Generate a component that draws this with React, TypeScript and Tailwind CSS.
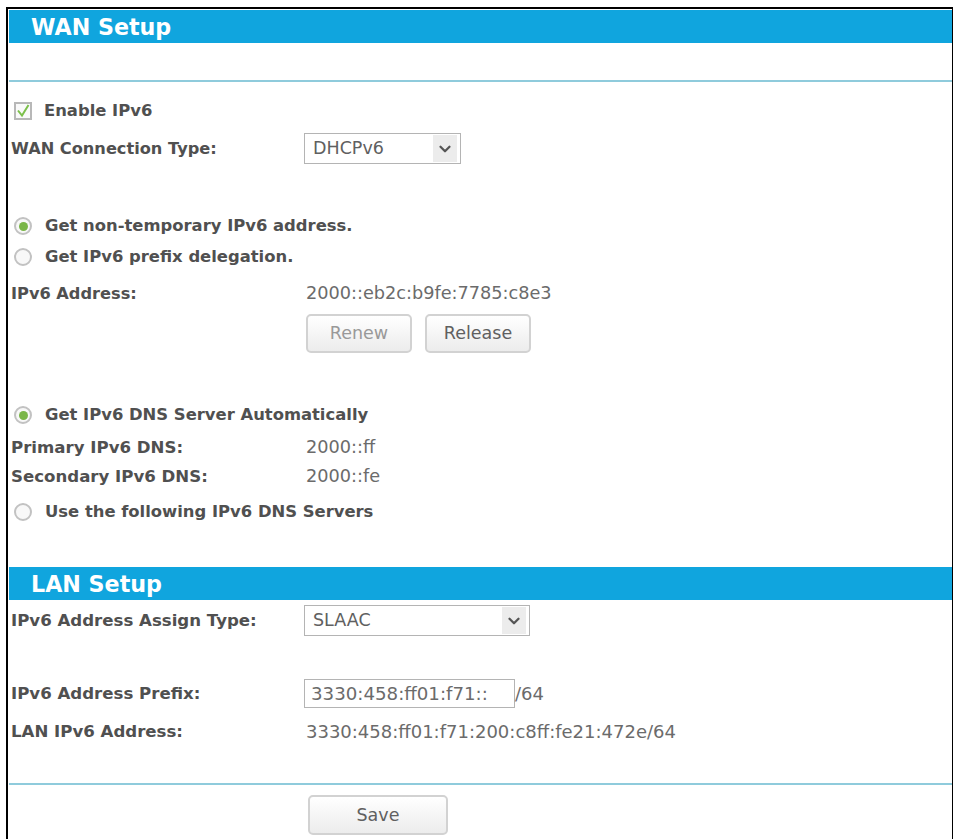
import { ReactNode } from "react";
import { ChevronDown } from "lucide-react";

const labelFont = "font-['DejaVu_Sans',sans-serif]";

function SectionHeader({ title, className = "" }: { title: string; className?: string }) {
  return (
    <div className={`flex h-[33px] items-center bg-[#10a5de] pl-[22px] pt-[3px] text-[22.2px] font-bold text-white ${className}`}>
      {title}
    </div>
  );
}

function Label({ children, className = "text-[16.6px]" }: { children: ReactNode; className?: string }) {
  return <div className={`w-[295px] shrink-0 pl-[2px] pt-[2px] font-bold text-[#505050] ${className}`}>{children}</div>;
}

function Value({ children }: { children: ReactNode }) {
  return <div className="pl-[2px] text-[17.7px] text-[#6b6b6b]">{children}</div>;
}

function Radio({ checked = false, label }: { checked?: boolean; label: string }) {
  return (
    <div className="flex items-center pl-[5px] text-[16.4px] font-bold text-[#505050]">
      <span className="mr-[13px] flex size-[18px] items-center justify-center rounded-full border-2 border-[#c2c2c2] bg-[#f8f8f8]">
        {checked && <span className="size-[9px] rounded-full bg-[#7ab648]" />}
      </span>
      {label}
    </div>
  );
}

function Select({ value, className }: { value: string; className: string }) {
  return (
    <div className={`flex items-center justify-between border border-[#b4b4b4] bg-white pl-[8px] pr-[3px] text-[17.5px] text-[#606060] ${className}`}>
      {value}
      <span className="flex h-[27px] w-[24px] items-center justify-center bg-[#ececec]">
        <ChevronDown className="size-[18px] text-[#555]" strokeWidth={3} />
      </span>
    </div>
  );
}

function Button({ label, width, muted = false }: { label: string; width: string; muted?: boolean }) {
  return (
    <div
      className={`flex items-center justify-center rounded-[5px] border-2 border-[#d2d2d2] bg-gradient-to-b from-white to-[#ececec] text-[17.5px] ${width} ${
        muted ? "text-[#999]" : "text-[#606060]"
      }`}
    >
      {label}
    </div>
  );
}

export default function App() {
  return (
    <div className={`min-h-[839px] bg-white pl-[6px] pr-[3px] pt-[7px] ${labelFont}`}>
      <div className="h-[832px] border-l-2 border-r border-t-2 border-black pl-px pt-px">
        <SectionHeader title="WAN Setup" />
        <div className="mt-[37px] h-[2px] bg-[#8fcbdc]" />

        <div className="mt-[19px] flex h-[20px] items-center pl-[5px] text-[16.4px] font-bold text-[#505050]">
          <span className="mr-[12px] flex size-[18px] items-center justify-center border-2 border-[#b8b8b8] bg-[#fafafa]">
            <svg viewBox="0 0 14 14" className="size-[16px]">
              <path d="M2 6.5l4 5L12.5 1" fill="none" stroke="#7cc04b" strokeWidth="2" />
            </svg>
          </span>
          Enable IPv6
        </div>

        <div className="mt-[12px] flex h-[31px] items-center">
          <Label className="text-[16.2px]">WAN Connection Type:</Label>
          <Select value="DHCPv6" className="h-[31px] w-[157px]" />
        </div>

        <div className="mt-[50px] h-[20px]">
          <Radio checked label="Get non-temporary IPv6 address." />
        </div>
        <div className="mt-[11px] h-[20px]">
          <Radio label="Get IPv6 prefix delegation." />
        </div>

        <div className="mt-[18px] flex h-[20px] items-center">
          <Label className="text-[16.2px]">IPv6 Address:</Label>
          <Value>2000::eb2c:b9fe:7785:c8e3</Value>
        </div>

        <div className="mt-[11px] flex h-[39px] gap-[13px] pl-[297px]">
          <Button label="Renew" width="w-[106px]" muted />
          <Button label="Release" width="w-[106px]" />
        </div>

        <div className="mt-[50px] h-[20px]">
          <Radio checked label="Get IPv6 DNS Server Automatically" />
        </div>
        <div className="mt-[14px] flex h-[20px] items-center">
          <Label>Primary IPv6 DNS:</Label>
          <Value>2000::ff</Value>
        </div>
        <div className="mt-[9px] flex h-[20px] items-center">
          <Label>Secondary IPv6 DNS:</Label>
          <Value>2000::fe</Value>
        </div>
        <div className="mt-[14px] h-[20px]">
          <Radio label="Use the following IPv6 DNS Servers" />
        </div>

        <SectionHeader title="LAN Setup" className="mt-[47px]" />

        <div className="mt-[5px] flex h-[31px] items-center">
          <Label>IPv6 Address Assign Type:</Label>
          <Select value="SLAAC" className="h-[31px] w-[226px]" />
        </div>

        <div className="mt-[43px] flex h-[29px] items-center">
          <Label>IPv6 Address Prefix:</Label>
          <div className="flex h-[29px] w-[211px] items-center border border-[#b4b4b4] pl-[6px] text-[18.2px] text-[#6b6b6b]">
            3330:458:ff01:f71::
          </div>
          <span className="text-[18px] text-[#6b6b6b]">/64</span>
        </div>

        <div className="mt-[13px] flex h-[20px] items-center">
          <Label>LAN IPv6 Address:</Label>
          <div className="pl-[2px] text-[18px] text-[#6b6b6b]">3330:458:ff01:f71:200:c8ff:fe21:472e/64</div>
        </div>

        <div className="mt-[42px] h-[2px] bg-[#8fcbdc]" />

        <div className="mt-[10px] flex h-[40px] pl-[299px]">
          <Button label="Save" width="w-[140px]" />
        </div>
      </div>
    </div>
  );
}
